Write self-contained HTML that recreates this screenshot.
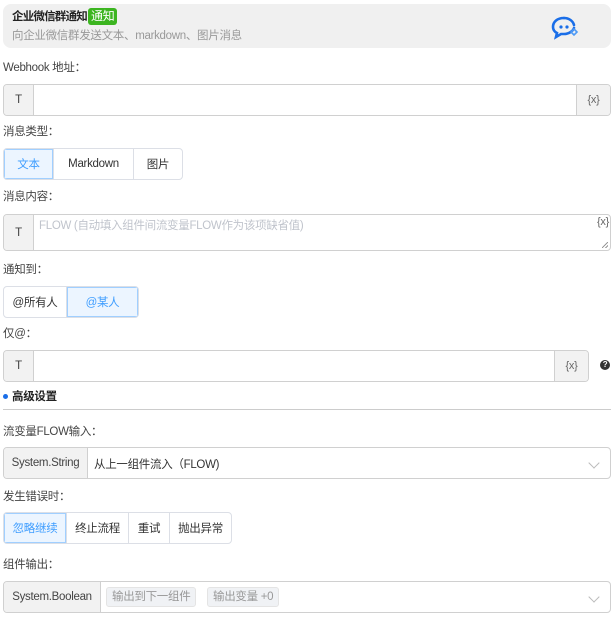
<!DOCTYPE html>
<html><head><meta charset="utf-8"><style>
*{box-sizing:border-box;margin:0;padding:0}
body{width:614px;height:617px;background:#fff;font-family:"Liberation Sans","Noto Sans CJK SC",sans-serif;font-size:11.5px;letter-spacing:-0.3px;color:#333;position:relative;overflow:hidden}
.a{position:absolute}
.lbl{position:absolute;left:3px;font-size:11.5px;color:#444;line-height:14px}
.inp{position:absolute;border:1px solid #d0d0d0;border-radius:4px;background:#fff;overflow:hidden}
.pre{position:absolute;left:0;top:0;bottom:0;background:#f2f2f2;border-right:1px solid #d0d0d0;display:flex;align-items:center;justify-content:center;color:#444;white-space:nowrap}
.suf{position:absolute;right:0;top:0;bottom:0;background:#f2f2f2;border-left:1px solid #d0d0d0;display:flex;align-items:center;justify-content:center;color:#666;font-size:11px}
.seg{position:absolute;display:flex;height:32px;border:1px solid #dcdfe6;border-radius:4px;overflow:hidden}
.seg div{display:flex;align-items:center;justify-content:center;border-left:1px solid #dcdfe6;color:#333;font-size:11.5px}
.seg div:first-child{border-left:none}
.seg .on{background:#ecf5ff;color:#409eff;box-shadow:0 0 0 1px #a0cfff inset}
.chev{position:absolute;right:12px;top:11px;width:8px;height:8px;border-right:1px solid #bbb;border-bottom:1px solid #bbb;transform:rotate(45deg)}
.tag{position:absolute;background:#f0f2f5;border:1px solid #e4e4e4;border-radius:3px;color:#999;font-size:11.5px;height:20px;line-height:18px;padding:0 5px;white-space:nowrap}
</style></head><body>
<div class="a" style="left:3px;top:4px;width:608px;height:44px;background:#f0f0f0;border-radius:8px"></div>
<div class="a" style="left:12px;top:9px;font-weight:bold;font-size:11.5px;letter-spacing:-0.8px;color:#222;line-height:16px">企业微信群通知</div>
<div class="a" style="left:88px;top:8px;height:17px;padding:0 3px;background:#3cb520;color:#fff;font-size:12px;line-height:17px;border-radius:3px">通知</div>
<div class="a" style="left:12px;top:29px;color:#999;line-height:14px">向企业微信群发送文本、markdown、图片消息</div>
<svg class="a" style="left:550px;top:16px" width="32" height="26" viewBox="0 0 32 26">
<path d="M14 2C7 2 3 6 3 11c0 3 2 5 4 6l-1 4 5-3c1 0 2 0 3 0 5 0 9-3 10-6" fill="none" stroke="#1a6ee8" stroke-width="2.6" stroke-linecap="round"/>
<path d="M14 2c5 0 9 3 10 7" fill="none" stroke="#1a6ee8" stroke-width="2.6" stroke-linecap="round"/>
<circle cx="11" cy="11" r="1.6" fill="#1a6ee8"/><circle cx="17" cy="11" r="1.6" fill="#1a6ee8"/>
<path d="M24 13l3 3-3 3-3-3z" fill="none" stroke="#4d9af5" stroke-width="1.6"/>
</svg>
<div class="lbl" style="top:61px">Webhook 地址：</div>
<div class="inp" style="left:3px;top:84px;width:608px;height:32px"><div class="pre" style="width:30px">T</div><div class="suf" style="width:34px">{x}</div></div>
<div class="lbl" style="top:125px">消息类型：</div>
<div class="seg" style="left:3px;top:148px"><div class="on" style="width:49px">文本</div><div style="width:80px">Markdown</div><div style="width:49px">图片</div></div>
<div class="lbl" style="top:190px">消息内容：</div>
<div class="inp" style="left:3px;top:214px;width:608px;height:37px"><div class="pre" style="width:30px">T</div>
<div class="a" style="left:35px;top:2px;color:#c0c4cc">FLOW (自动填入组件间流变量FLOW作为该项缺省值)</div>
<div class="a" style="right:1px;top:1px;color:#666;font-size:11px">{x}</div>
<div class="a" style="right:2px;bottom:2px;width:6px;height:6px;background:linear-gradient(135deg,transparent 45%,#999 45%,#999 55%,transparent 55%,transparent 75%,#999 75%,#999 85%,transparent 85%)"></div></div>
<div class="lbl" style="top:263px">通知到：</div>
<div class="seg" style="left:3px;top:286px"><div style="width:62px">@所有人</div><div class="on" style="width:72px">@某人</div></div>
<div class="lbl" style="top:327px">仅@：</div>
<div class="inp" style="left:3px;top:350px;width:586px;height:32px"><div class="pre" style="width:30px">T</div><div class="suf" style="width:34px">{x}</div></div>
<div class="a" style="left:600px;top:360px;width:10px;height:10px;border-radius:50%;background:#333;color:#fff;font-size:8px;line-height:10px;text-align:center;font-weight:bold">?</div>
<div class="a" style="left:3px;top:394px;width:5px;height:5px;border-radius:50%;background:#1a6ee8"></div>
<div class="a" style="left:12px;top:390px;font-weight:bold;color:#222;line-height:14px">高级设置</div>
<div class="a" style="left:3px;top:409px;width:608px;height:1px;background:#ccc"></div>
<div class="lbl" style="top:425px">流变量FLOW输入：</div>
<div class="inp" style="left:3px;top:447px;width:608px;height:32px"><div class="pre" style="width:84px">System.String</div>
<div class="a" style="left:90px;top:8px;color:#333">从上一组件流入（FLOW)</div><div class="chev"></div></div>
<div class="lbl" style="top:490px">发生错误时：</div>
<div class="seg" style="left:3px;top:512px"><div class="on" style="width:62px">忽略继续</div><div style="width:62px">终止流程</div><div style="width:41px">重试</div><div style="width:62px">抛出异常</div></div>
<div class="lbl" style="top:558px">组件输出：</div>
<div class="inp" style="left:3px;top:581px;width:608px;height:32px"><div class="pre" style="width:97px">System.Boolean</div>
<div class="tag" style="left:102px;top:5px">输出到下一组件</div><div class="tag" style="left:203px;top:5px">输出变量 +0</div><div class="chev"></div></div>
</body></html>
